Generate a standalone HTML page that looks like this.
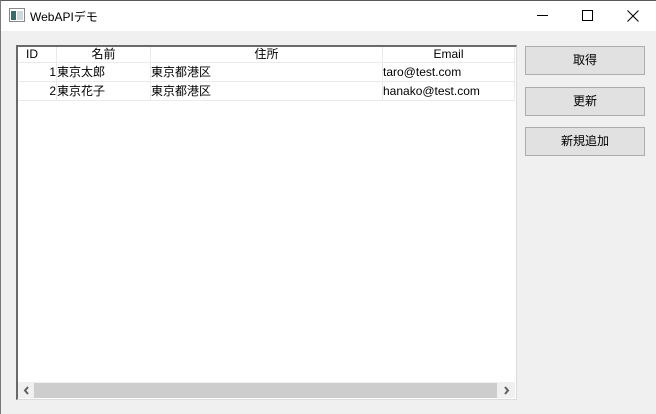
<!DOCTYPE html>
<html><head><meta charset="utf-8"><style>
*{margin:0;padding:0;box-sizing:border-box}
body{width:656px;height:414px;background:#f0f0f0;position:relative;overflow:hidden;font-family:"Liberation Sans","Noto Sans CJK JP",sans-serif;font-size:12px;color:#000}
.win{position:absolute;left:0;top:0;width:656px;height:414px;border:1px solid #7a7a7a;border-top:1px solid #5a5a5a;border-right:none;border-bottom:none}
.title{position:absolute;left:0;top:0;width:656px;height:31px;background:#fff}
.abs{position:absolute}
.grid{position:absolute;left:16px;top:45px;width:501px;height:355px;background:#fff;border:1px solid #dcdcdc;border-top:2px solid #6a6a6a;border-left:2px solid #6a6a6a}
.c{position:absolute;height:19px;line-height:18px;border-right:1px solid #eaeaea;border-bottom:1px solid #eaeaea;white-space:nowrap;overflow:hidden}
.btn{position:absolute;left:525px;width:120px;height:29px;background:#e1e1e1;border:1px solid #adadad;text-align:center;line-height:27px;font-size:12px}
</style></head><body>
<div class="title">
<svg class="abs" style="left:9px;top:8px" width="16" height="14"><rect x="0.5" y="0.5" width="15" height="13" fill="#fff" stroke="#888"/><rect x="2" y="3" width="5" height="9" fill="#3a6a6a"/><rect x="8" y="3" width="6" height="9" fill="#cfd8dc"/></svg>
<div class="abs" style="left:30px;top:8px;font-size:12px">WebAPIデモ</div>
<div class="abs" style="left:537px;top:15px;width:11px;height:1px;background:#000"></div>
<div class="abs" style="left:582px;top:10px;width:11px;height:11px;border:1px solid #000"></div>
<svg class="abs" style="left:627px;top:10px" width="12" height="12"><path d="M0.5 0.5L11.5 11.5M11.5 0.5L0.5 11.5" stroke="#000" stroke-width="1"/></svg>
</div>
<div class="win"></div>
<div class="grid">
<div class="c" style="left:0;top:0;width:39px;height:16px;line-height:14px;padding-left:8px">ID</div>
<div class="c" style="left:39px;top:0;width:94px;height:16px;line-height:14px;text-align:center">名前</div>
<div class="c" style="left:133px;top:0;width:232px;height:16px;line-height:14px;text-align:center">住所</div>
<div class="c" style="left:365px;top:0;width:132px;height:16px;line-height:14px;text-align:center">Email</div>
<div class="c" style="left:0;top:16px;width:39px;text-align:right">1</div>
<div class="c" style="left:39px;top:16px;width:94px">東京太郎</div>
<div class="c" style="left:133px;top:16px;width:232px">東京都港区</div>
<div class="c" style="left:365px;top:16px;width:132px">taro@test.com</div>
<div class="c" style="left:0;top:35px;width:39px;text-align:right">2</div>
<div class="c" style="left:39px;top:35px;width:94px">東京花子</div>
<div class="c" style="left:133px;top:35px;width:232px">東京都港区</div>
<div class="c" style="left:365px;top:35px;width:132px">hanako@test.com</div>
<div class="abs" style="left:0;top:335px;width:497px;height:16px;background:#f0f0f0"></div>
<div class="abs" style="left:16px;top:336px;width:463px;height:15px;background:#cdcdcd"></div>
<svg class="abs" style="left:5px;top:339px" width="8" height="9"><path d="M5 1L2 4.5L5 8" stroke="#606060" stroke-width="2" fill="none"/></svg>
<svg class="abs" style="left:484px;top:339px" width="8" height="9"><path d="M3 1L6 4.5L3 8" stroke="#606060" stroke-width="2" fill="none"/></svg>
</div>
<div class="btn" style="top:46px">取得</div>
<div class="btn" style="top:87px">更新</div>
<div class="btn" style="top:127px">新規追加</div>
</body></html>
